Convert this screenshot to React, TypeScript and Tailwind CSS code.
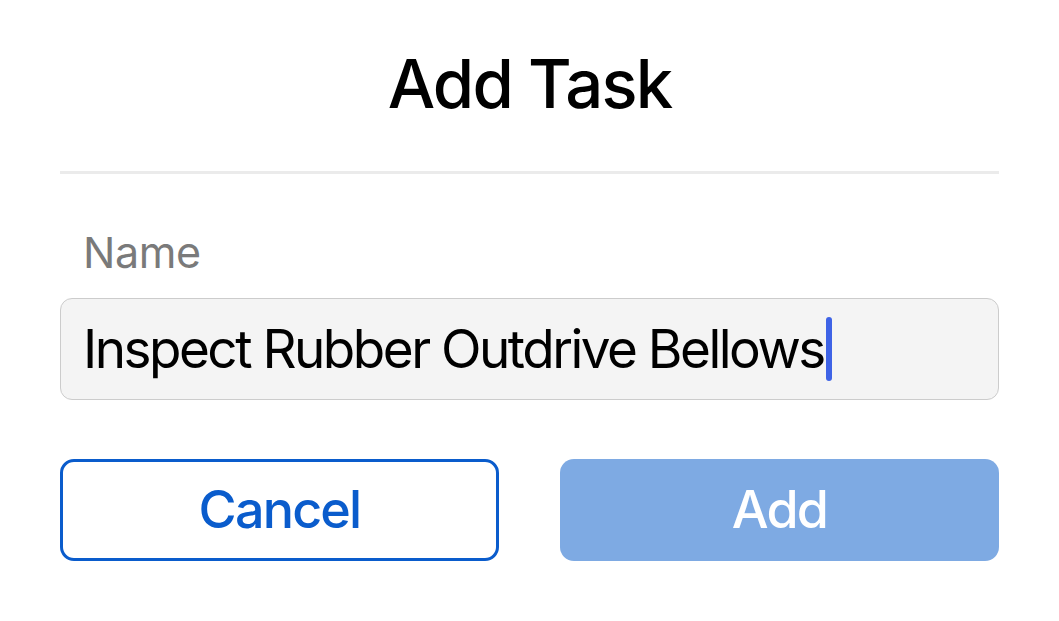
export default function App() {
  return (
    <div
      className="w-[1059px] h-[621px] bg-white px-[60px] flex flex-col"
      style={{ fontFamily: 'Inter, "Noto Sans", sans-serif' }}
    >
      <h1 className="h-[171px] flex items-center justify-center text-[67px] font-medium text-black pb-[3px] tracking-[-1.8px]">
        Add Task
      </h1>
      <div className="h-[3px] bg-[#ebebeb]" />

      <label className="mt-[48px] pl-[23px] text-[43px] leading-[60px] text-[#7a7a7a] tracking-[-0.4px]">Name</label>

      <div className="mt-[16px] h-[102px] rounded-[12px] border border-[#cccccc] bg-[#f4f4f4] flex items-center pl-[22px]">
        <span className="text-[53px] text-black leading-none tracking-[-2.5px]">Inspect Rubber Outdrive Bellows</span>
        <span className="ml-[2px] w-[6px] h-[64px] rounded-full bg-[#3e63e6]" />
      </div>

      <div className="mt-[59px] grid grid-cols-2 gap-[61px]">
        <button className="h-[102px] rounded-[14px] border-[3px] border-[#0a5ccc] bg-white text-[#0a5ccc] text-[52px] font-medium tracking-[-1.8px]">
          Cancel
        </button>
        <button className="h-[102px] rounded-[14px] bg-[#7eaae3] text-white text-[52px] font-medium tracking-[-1.8px]">
          Add
        </button>
      </div>
    </div>
  );
}
